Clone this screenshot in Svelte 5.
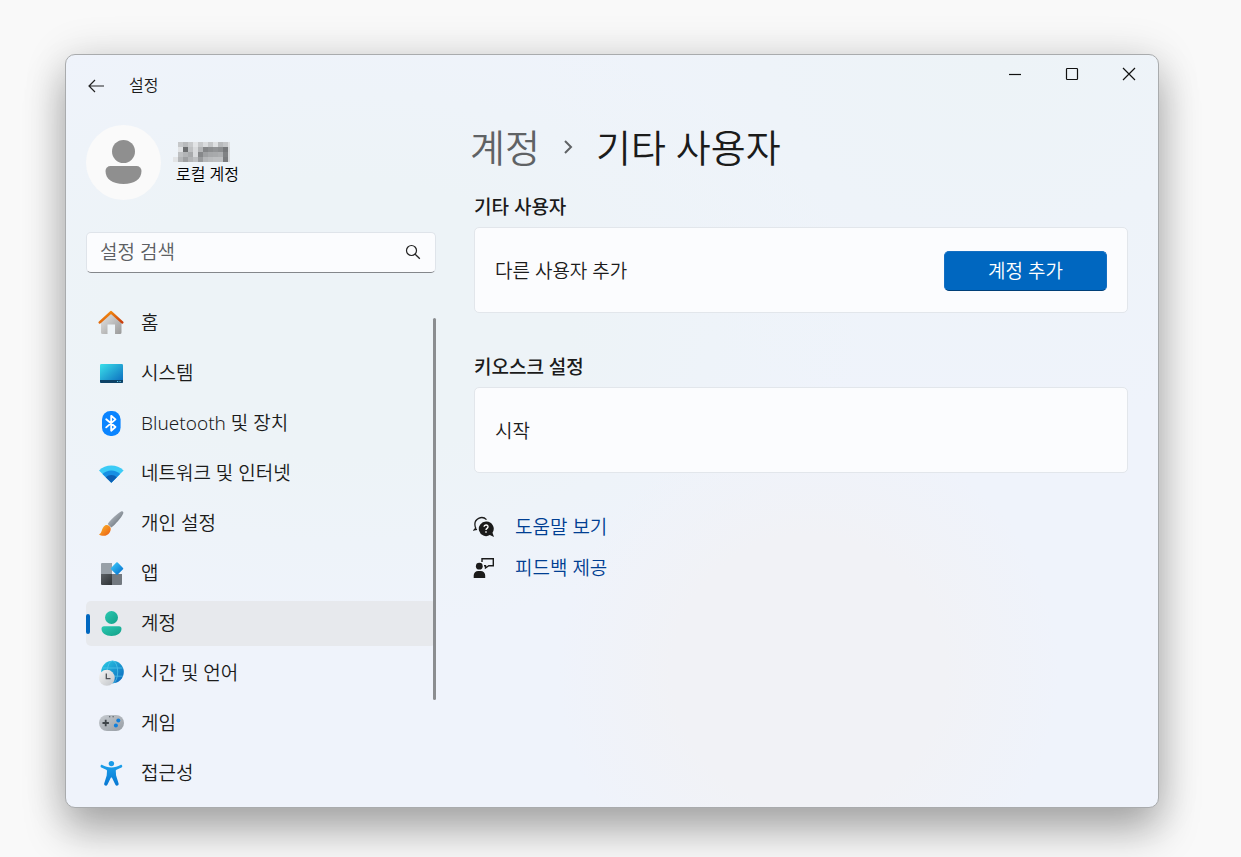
<script>
  const items = [
    { id: 'home', label: '홈' },
    { id: 'system', label: '시스템' },
    { id: 'bluetooth', label: 'Bluetooth 및 장치' },
    { id: 'network', label: '네트워크 및 인터넷' },
    { id: 'personal', label: '개인 설정' },
    { id: 'apps', label: '앱' },
    { id: 'accounts', label: '계정' },
    { id: 'time', label: '시간 및 언어' },
    { id: 'gaming', label: '게임' },
    { id: 'access', label: '접근성' }
  ];
  let current = $state('accounts');
  let query = $state('');

  // Grey levels of the pixelated user name, one row of blocks per line
  const mosaic = [
    [0, 198, 184, 200, 226, 199, 218, 196, 222, 184, 196, 222],
    [0, 224, 108, 190, 216, 178, 132, 140, 146, 140, 118, 214],
    [0, 190, 178, 168, 216, 134, 158, 166, 168, 172, 128, 216],
    [226, 180, 158, 178, 190, 152, 180, 186, 190, 190, 122, 216]
  ];
</script>

{#snippet icon(id)}
  <svg class="nav-icon" width="26" height="26" viewBox="0 0 26 26" aria-hidden="true">
    {#if id === 'home'}
      <path d="M3 11.5 13 3l10.5 8.500V22.500a1.500 1.500 0 0 1-1.500 1.500h-5v-9.500h-7.500V24H4.500A1.500 1.500 0 0 1 3 22.500Z" fill="url(#g-wall)" />
      <path d="M1.800 12.400 13 2.200l11.200 10.200" fill="none" stroke="url(#g-roof)" stroke-width="2.600" stroke-linecap="round" stroke-linejoin="round" />
    {:else if id === 'system'}
      <rect x="2" y="4" width="23" height="19" rx="1.200" fill="url(#g-screen)" />
      <path d="M2 20h23v1.800a1.200 1.200 0 0 1-1.200 1.200H3.200A1.200 1.200 0 0 1 2 21.800Z" fill="#0d4266" />
      <path d="M19 21h1.200v1H19zM21.500 21h1.200v1h-1.200z" fill="#5fc8e8" />
    {:else if id === 'bluetooth'}
      <rect x="4" y="1" width="18.600" height="25" rx="8.500" fill="#0a84ff" />
      <path d="M8.200 9.300 17.500 17l-4.300 3.700V5.800l4.300 3.600L8.200 17.400" fill="none" stroke="#fff" stroke-width="1.800" stroke-linejoin="round" stroke-linecap="round" />
    {:else if id === 'network'}
      <path d="M1 10.500a17.500 17.500 0 0 1 24.600 0L13.300 22.800Z" fill="#3ccbf6" />
      <path d="M4.500 14a12.500 12.500 0 0 1 17.600 0l-8.800 8.800Z" fill="#178fe3" />
      <path d="M7.800 17.300a7.800 7.800 0 0 1 11 0l-5.500 5.500Z" fill="#0d5fb3" />
    {:else if id === 'personal'}
      <path d="M23 1.600c1.500-1 2.900.2 2.200 1.900-2 4.500-7.700 10.800-11.900 14.100l-3.600-3.700C13.200 9.300 19 4 23 1.600Z" fill="url(#g-handle)" />
      <path d="M7 15.500c2.300-1.300 5.200.300 5.700 2.700.4 3.300-2.100 7.600-6.900 7.600-2 0-4-.5-4.800-1.500 3.200-.6 2.400-6.600 6-8.800Z" fill="url(#g-brush)" />
    {:else if id === 'apps'}
      <path d="M4 3h10v11H3V4a1 1 0 0 1 1-1Z" fill="#98a0a8" />
      <path d="M3 14h11v11H4a1 1 0 0 1-1-1Z" fill="url(#g-dark)" />
      <path d="M14 14h10v10a1 1 0 0 1-1 1h-9Z" fill="#737980" />
      <path d="m18.300 2.600-5.300 5.300a1 1 0 0 0 0 1.400l5.300 5.300a1 1 0 0 0 1.400 0l5.300-5.300a1 1 0 0 0 0-1.400l-5.300-5.300a1 1 0 0 0-1.400 0Z" fill="url(#g-diamond)" />
    {:else if id === 'accounts'}
      <circle cx="13.500" cy="7.500" r="6.500" fill="url(#g-user)" />
      <path d="M6 16.300h15a2.500 2.500 0 0 1 2.500 2.500c0 4.500-4.300 7.200-10 7.200s-10-2.700-10-7.200A2.500 2.500 0 0 1 6 16.300Z" fill="url(#g-user)" />
    {:else if id === 'time'}
      <circle cx="14.500" cy="12" r="11.300" fill="url(#g-globe)" />
      <g fill="none" stroke="#5fd0f0" stroke-width=".9" opacity=".7">
        <ellipse cx="14.500" cy="12" rx="5.200" ry="11.200" />
        <path d="M4.500 8h20M4 16.200h21" />
      </g>
      <circle cx="8.800" cy="17.800" r="8" fill="url(#g-clock)" />
      <path d="M8.300 13.500v5.200h4.200" fill="none" stroke="#4d5257" stroke-width="1.300" />
    {:else if id === 'gaming'}
      <rect x="1" y="5" width="25" height="16" rx="8" fill="url(#g-pad)" />
      <path d="M7.700 9.800v6.400M4.500 13h6.400" stroke="#3f454a" stroke-width="1.800" />
      <circle cx="20.300" cy="10.500" r="2" fill="#0f7fdc" />
      <circle cx="17.900" cy="15.500" r="2" fill="#0f7fdc" />
      <path d="M11 6.300h1.300v1H11zM14.500 6.300h1.300v1h-1.300z" fill="#4a5056" />
    {:else}
      <circle cx="13.400" cy="3.600" r="2.700" fill="#1a9be8" />
      <path d="M4.300 4.900c2.800 1.500 5.800 2.500 9.100 2.500s6.300-1 9.100-2.500c1.600-.6 2.500 1.800 1 2.500l-5 2.300c-.6.300-.8.700-.7 1.300l.3 4.500 2.500 8c.5 2-2.400 3-3.200 1.200l-3.400-6.900c-.3-.5-.9-.5-1.200 0l-3.400 6.900c-.8 1.800-3.700.8-3.200-1.200l2.500-8 .3-4.500c0-.6-.1-1-.7-1.300l-5-2.300c-1.500-.7-.6-3.100 1-2.500Z" fill="url(#g-access)" />
    {/if}
  </svg>
{/snippet}

<svg class="defs" width="0" height="0" aria-hidden="true">
  <defs>
    <linearGradient id="g-wall" x1="0" y1="0" x2="1" y2="1"><stop offset="0" stop-color="#e6e6e6" /><stop offset="1" stop-color="#999" /></linearGradient>
    <linearGradient id="g-roof" x1="0" y1="0" x2="1" y2="1"><stop offset="0" stop-color="#fb9a10" /><stop offset="1" stop-color="#c93d0c" /></linearGradient>
    <linearGradient id="g-screen" x1="0" y1="0" x2="1" y2="1"><stop offset="0" stop-color="#3be0ea" /><stop offset="1" stop-color="#0a68bd" /></linearGradient>
    <linearGradient id="g-handle" x1="0" y1="0" x2="1" y2="1"><stop offset=".2" stop-color="#b6bcc4" /><stop offset=".8" stop-color="#6b737b" /></linearGradient>
    <linearGradient id="g-brush" x1="0" y1="0" x2="1" y2="1"><stop offset="0" stop-color="#fdbb2d" /><stop offset="1" stop-color="#ea5a12" /></linearGradient>
    <linearGradient id="g-dark" x1="0" y1="0" x2="1" y2="1"><stop offset="0" stop-color="#5c6166" /><stop offset="1" stop-color="#2e3235" /></linearGradient>
    <linearGradient id="g-diamond" x1="0" y1="0" x2="1" y2="1"><stop offset=".1" stop-color="#38c5f7" /><stop offset=".9" stop-color="#0873d0" /></linearGradient>
    <linearGradient id="g-user" x1="0" y1="0" x2="1" y2="1"><stop offset="0" stop-color="#2cc9b2" /><stop offset="1" stop-color="#12a088" /></linearGradient>
    <linearGradient id="g-globe" x1="0" y1="0" x2="1" y2="1"><stop offset="0" stop-color="#2bcde4" /><stop offset="1" stop-color="#0a62bd" /></linearGradient>
    <linearGradient id="g-clock" x1="0" y1="0" x2="1" y2="1"><stop offset="0" stop-color="#f8f8f8" /><stop offset="1" stop-color="#bfc2c6" /></linearGradient>
    <linearGradient id="g-pad" x1="0" y1="0" x2="1" y2="1"><stop offset="0" stop-color="#c6cbd0" /><stop offset="1" stop-color="#969ca3" /></linearGradient>
    <linearGradient id="g-access" x1="0" y1="0" x2="0" y2="1"><stop offset="0" stop-color="#1b9fea" /><stop offset="1" stop-color="#0877d2" /></linearGradient>
  </defs>
</svg>

<div class="desktop">
  <div class="window">
    <header class="titlebar">
      <button class="back" aria-label="뒤로">
        <svg width="18" height="16" viewBox="0 0 18 16" aria-hidden="true"><path d="M8 2 2 8l6 6M2 8h15" fill="none" stroke="#222" stroke-width="1.200" /></svg>
      </button>
      <span class="app-name">설정</span>
      <div class="caption">
        <button aria-label="최소화"><svg width="14" height="14" viewBox="0 0 14 14"><path d="M1 7.500h12" stroke="#111" stroke-width="1.200" /></svg></button>
        <button aria-label="최대화"><svg width="14" height="14" viewBox="0 0 14 14"><rect x="1.500" y="1.500" width="11" height="11" rx=".8" fill="none" stroke="#111" stroke-width="1.200" /></svg></button>
        <button aria-label="닫기"><svg width="14" height="14" viewBox="0 0 14 14"><path d="m1 1 12 12M13 1 1 13" stroke="#111" stroke-width="1.200" /></svg></button>
      </div>
    </header>

    <div class="columns">
      <aside class="sidebar">
        <div class="profile">
          <svg class="avatar" width="75" height="75" viewBox="0 0 75 75" aria-hidden="true">
            <circle cx="37.500" cy="37.500" r="37.500" fill="#fafafa" />
            <circle cx="37.500" cy="26.500" r="11.500" fill="#8f8f8f" />
            <path d="M24.500 41h26a5 5 0 0 1 5 5c0 8-7 13-18 13s-18-5-18-13a5 5 0 0 1 5-5Z" fill="#8f8f8f" />
          </svg>
          <div class="who">
            <svg class="mosaic" width="58" height="20" viewBox="0 0 58 20" shape-rendering="crispEdges" aria-hidden="true">
              {#each mosaic as row, r}
                {#each row as level, c}
                  {#if level}
                    <rect x={c * 5} y={r * 5} width={c === 11 ? 2 : 5} height="5" fill="rgb({level},{level + 2},{level + 4})" />
                  {/if}
                {/each}
              {/each}
            </svg>
            <span class="kind">로컬 계정</span>
          </div>
        </div>

        <label class="search">
          <input type="text" placeholder="설정 검색" aria-label="설정 검색" bind:value={query} />
          <svg width="16" height="16" viewBox="0 0 16 16" aria-hidden="true"><circle cx="6.500" cy="6.500" r="5" fill="none" stroke="#222" stroke-width="1.200" /><path d="m10.200 10.200 4.600 4.600" stroke="#222" stroke-width="1.300" /></svg>
        </label>

        <nav>
          {#each items as item}
            <button class="nav-item" class:active={item.id === current} onclick={() => (current = item.id)}>
              {@render icon(item.id)}
              <span>{item.label}</span>
            </button>
          {/each}
          <div class="thumb"></div>
        </nav>
      </aside>

      <main>
        <h1>
          <a href="#accounts">계정</a>
          <svg width="16" height="16" viewBox="0 0 16 16" aria-hidden="true"><path d="m5 2 6 6-6 6" fill="none" stroke="#5f6265" stroke-width="2" /></svg>
          <span>기타 사용자</span>
        </h1>

        <section>
          <h2>기타 사용자</h2>
          <div class="card">
            <span>다른 사용자 추가</span>
            <button class="primary">계정 추가</button>
          </div>
        </section>

        <section>
          <h2>키오스크 설정</h2>
          <div class="card"><span>시작</span></div>
        </section>

        <div class="links">
          <a href="#help">
            <svg width="22" height="22" viewBox="0 0 22 22" aria-hidden="true">
              <path d="M13.500 3.600A6.800 6.800 0 0 0 2 9.500c.1 1 .4 1.900.7 2.600L1 14l3-.6" fill="none" stroke="#1b1b1b" stroke-width="1.300" />
              <path d="M13 5.500a7.300 7.300 0 1 0 3.800 13.600L21 21l-1.500-4.200A7.300 7.300 0 0 0 13 5.500Z" fill="#1b1b1b" />
              <path d="M11 10.800c.2-2.700 4.300-2.300 4 .1-.2 1.500-2 1.500-2 3.200M13 15.300v1.500" fill="none" stroke="#fff" stroke-width="1.400" />
            </svg>
            <span>도움말 보기</span>
          </a>
          <a href="#feedback">
            <svg width="22" height="22" viewBox="0 0 22 22" aria-hidden="true">
              <circle cx="6.300" cy="9.200" r="3.400" fill="#1b1b1b" />
              <path d="M.7 21v-2.500a4.500 4.500 0 0 1 4.500-4.500h2.500a4.500 4.500 0 0 1 4.500 4.500V21Z" fill="#1b1b1b" />
              <path d="M9 5V1.700h11.300v7h-4.500L12.500 11V8.700H11" fill="none" stroke="#1b1b1b" stroke-width="1.400" />
            </svg>
            <span>피드백 제공</span>
          </a>
        </div>
      </main>
    </div>
  </div>
</div>

<style>
  :global(body) {
    margin: 0;
    background: #f9f9f9;
  }
  .defs {
    position: absolute;
  }
  .desktop {
    box-sizing: border-box;
    min-height: 100vh;
    padding: 54px 82px 49px 65px;
    display: flex;
    overflow: hidden;
    font-family: 'Noto Sans', 'Noto Sans CJK KR', sans-serif;
    font-weight: 350;
    font-size: 19px;
    line-height: 24px;
    color: #1b1b1b;
  }
  button,
  input {
    font: inherit;
    color: inherit;
    border: 0;
    padding: 0;
    background: none;
  }
  a {
    color: inherit;
    text-decoration: none;
  }
  .window {
    flex: 1;
    box-sizing: border-box;
    border: 1px solid #a9abad;
    border-radius: 10px;
    background:
      radial-gradient(circle at 68% 82%, #f1f2f6 0, #f1f2f6 14%, transparent 26%),
      radial-gradient(ellipse at 85% 0, #edf3f7 0, transparent 35%),
      radial-gradient(ellipse at 25% 35%, #edf3f7 0, #edf3f7 20%, transparent 45%),
      #eff3fb;
    box-shadow:
      0 24px 40px rgba(0, 0, 0, 0.28),
      0 2px 44px rgba(0, 0, 0, 0.14);
  }
  .titlebar {
    display: flex;
    height: 60px;
    padding: 0 1px 0 21px;
  }
  .back {
    width: 20px;
    padding-top: 2px;
    display: flex;
    align-items: center;
  }
  .app-name {
    padding: 18px 0 0 22px;
    font-size: 16px;
  }
  .caption {
    margin-left: auto;
    display: flex;
  }
  .caption button {
    width: 57px;
    height: 38px;
    display: grid;
    place-items: center;
  }
  .columns {
    display: flex;
    gap: 38px;
    padding: 0 30px 5px 20px;
  }
  .sidebar {
    width: 350px;
    flex: none;
  }
  .profile {
    display: flex;
    gap: 12px;
    padding: 10px 0 32px;
  }
  .avatar {
    flex: none;
  }
  .who {
    padding-top: 17px;
    display: flex;
    flex-direction: column;
  }
  .kind {
    font-size: 16px;
    color: #000;
    padding-left: 3px;
  }
  .search {
    box-sizing: border-box;
    height: 41px;
    display: flex;
    align-items: center;
    padding: 0 14px 1px 13px;
    border: 1px solid #dfe4ea;
    border-bottom-color: #84878b;
    border-radius: 5px;
    background: #fbfcfe;
  }
  .search input {
    flex: 1;
    min-width: 0;
    outline: none;
  }
  .search input::placeholder {
    color: #5c5f63;
    opacity: 1;
  }
  nav {
    position: relative;
    display: flex;
    flex-direction: column;
    gap: 5px;
    padding-top: 28px;
  }
  .nav-item {
    box-sizing: border-box;
    position: relative;
    height: 45px;
    display: flex;
    align-items: center;
    gap: 17px;
    padding: 0 0 1px 12px;
    border-radius: 5px;
    text-align: left;
  }
  .nav-item.active {
    background: #e7e9ed;
  }
  .nav-item.active::before {
    content: '';
    position: absolute;
    left: 0;
    top: 13px;
    width: 4px;
    height: 20px;
    border-radius: 2px;
    background: #0067c0;
  }
  .thumb {
    position: absolute;
    right: 0;
    top: 45px;
    width: 3px;
    height: 382px;
    border-radius: 2px;
    background: #8b8d90;
  }
  main {
    flex: 1;
    min-width: 0;
    padding-top: 4px;
  }
  h1 {
    display: flex;
    align-items: center;
    gap: 20px;
    margin: 0 0 20px -4px;
    font-size: 38px;
    line-height: 56px;
    font-weight: 350;
  }
  h1 a {
    color: #5f6265;
  }
  h2 {
    margin: 0 0 8px;
    font-size: 19px;
    line-height: 24px;
    font-weight: 500;
  }
  section {
    margin-bottom: 42px;
  }
  .card {
    box-sizing: border-box;
    min-height: 86px;
    display: flex;
    align-items: center;
    justify-content: space-between;
    padding: 2px 20px 0;
    border: 1px solid #e2e6eb;
    border-radius: 5px;
    background: #fbfcfe;
  }
  .primary {
    box-sizing: border-box;
    width: 163px;
    height: 40px;
    border: 1px solid #146fc2;
    border-bottom-color: #003f78;
    border-radius: 5px;
    background: #0067c0;
    color: #fff;
  }
  .links {
    display: flex;
    flex-direction: column;
    align-items: flex-start;
    gap: 17px;
    margin-left: -1px;
    color: #003e92;
  }
  .links a {
    display: flex;
    align-items: center;
    gap: 20px;
  }
</style>
